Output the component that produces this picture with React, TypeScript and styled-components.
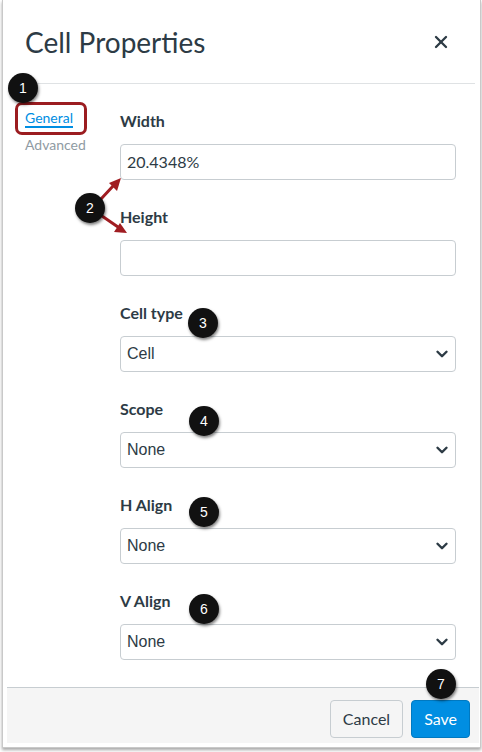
import React from 'react';
import styled, { createGlobalStyle } from 'styled-components';
import { X, ChevronDown } from 'lucide-react';

const GlobalStyle = createGlobalStyle`
  html, body {
    margin: 0;
    padding: 0;
    background: #fff;
  }
  body {
    font-family: Lato, 'Noto Sans', sans-serif;
    color: #2d3b45;
  }
  * {
    box-sizing: border-box;
  }
`;

const Page = styled.div`
  position: relative;
  width: 482px;
  height: 752px;
  overflow: hidden;
`;

const Dialog = styled.div`
  margin-left: 2px;
  width: 479px;
  height: 748px;
  display: flex;
  flex-direction: column;
  padding: 0 1px 4px 4px;
  background: #fff;
  border: 1px solid #c9c9c9;
  border-top: none;
  box-shadow: 0 2px 3px rgba(0, 0, 0, 0.35);
`;

const Header = styled.header`
  display: flex;
  align-items: flex-start;
  justify-content: space-between;
  height: 85px;
  margin: 0 4px 0 1px;
  padding: 25px 22px 0 17px;
  border-bottom: 1px solid #dfe2e4;
`;

const Title = styled.h1`
  margin: 0;
  font-size: 28px;
  line-height: 34px;
  font-weight: 400;
  color: #2d3b45;
`;

const CloseBtn = styled.button.attrs({ type: 'button' })`
  display: flex;
  align-items: center;
  justify-content: center;
  width: 24px;
  height: 34px;
  padding: 0;
  background: none;
  border: none;
  color: #2d3b45;
  svg {
    flex-shrink: 0;
  }
`;

const Body = styled.div`
  flex: 1;
  display: flex;
  padding-top: 25px;
`;

const Tabs = styled.nav`
  width: 113px;
  padding-left: 18px;
  display: flex;
  flex-direction: column;
  align-items: flex-start;
`;

const Tab = styled.span<{ $active?: boolean }>`
  font-size: 14px;
  line-height: 17px;
  color: ${(p) => (p.$active ? '#008ee2' : '#8f9ba3')};
  border-bottom: 2px solid ${(p) => (p.$active ? '#008ee2' : 'transparent')};
  & + & {
    margin-top: 8px;
  }
`;

const Form = styled.div`
  width: 336px;
  padding-top: 2px;
`;

const Field = styled.div`
  margin-bottom: 27px;
`;

const Label = styled.label`
  display: block;
  margin-bottom: 13px;
  font-size: 16px;
  line-height: 20px;
  font-weight: 700;
  color: #2d3b45;
`;

const TextInput = styled.input`
  display: block;
  width: 100%;
  height: 36px;
  padding: 0 6px;
  font-family: Lato, sans-serif;
  font-size: 16px;
  color: #2d3b45;
  background: #fff;
  border: 1px solid #c7cdd1;
  border-radius: 4px;
  outline: none;
`;

const Select = styled.div`
  display: flex;
  align-items: center;
  justify-content: space-between;
  height: 36px;
  padding: 0 4px 0 6px;
  font-family: 'Liberation Sans', Arial, sans-serif;
  font-size: 16px;
  color: #2d3b45;
  background: #fff;
  border: 1px solid #c7cdd1;
  border-radius: 4px;
`;

const Footer = styled.footer`
  display: flex;
  justify-content: flex-end;
  align-items: flex-start;
  gap: 8px;
  height: 57px;
  padding: 12px 9px 0 0;
  background: #f5f5f5;
  border-top: 1px solid #c7cdd1;
`;

const Button = styled.button.attrs({ type: 'button' })<{ $primary?: boolean }>`
  height: 38px;
  padding: 0 12px;
  font-family: Lato, sans-serif;
  font-size: 16px;
  font-weight: 400;
  border-radius: 4px;
  color: ${(p) => (p.$primary ? '#fff' : '#2d3b45')};
  background: ${(p) => (p.$primary ? '#008ee2' : '#f5f5f5')};
  border: 1px solid ${(p) => (p.$primary ? '#0079c1' : '#c7cdd1')};
`;

// callout layer
const Overlay = styled.div`
  position: absolute;
  inset: 0;
  pointer-events: none;
`;

const Bubble = styled.div<{ $x: number; $y: number }>`
  position: absolute;
  left: ${(p) => p.$x - 15}px;
  top: ${(p) => p.$y - 15}px;
  width: 30px;
  height: 30px;
  display: flex;
  align-items: center;
  justify-content: center;
  border-radius: 50%;
  background: #111;
  color: #fff;
  font-family: 'Liberation Sans', Arial, sans-serif;
  font-size: 14px;
  box-shadow: 1px 2px 3px rgba(0, 0, 0, 0.5);
`;

const Highlight = styled.div`
  position: absolute;
  left: 15px;
  top: 102px;
  width: 72px;
  height: 33px;
  border: 3px solid #9b1c20;
  border-radius: 7px;
`;

const Arrows = styled.svg`
  position: absolute;
  inset: 0;
`;

const bubbles = [
  { n: 1, x: 23, y: 88 },
  { n: 2, x: 90, y: 208 },
  { n: 3, x: 203, y: 323 },
  { n: 4, x: 204, y: 421 },
  { n: 5, x: 204, y: 512 },
  { n: 6, x: 204, y: 609 },
  { n: 7, x: 441, y: 684 },
];

const selects = [
  { label: 'Cell type', value: 'Cell' },
  { label: 'Scope', value: 'None' },
  { label: 'H Align', value: 'None' },
  { label: 'V Align', value: 'None' },
];

const App: React.FC = () => (
  <Page>
    <GlobalStyle />
    <Dialog>
      <Header>
        <Title>Cell Properties</Title>
        <CloseBtn aria-label="Close">
          <X size={20} strokeWidth={2.8} />
        </CloseBtn>
      </Header>
      <Body>
        <Tabs>
          <Tab $active>General</Tab>
          <Tab>Advanced</Tab>
        </Tabs>
        <Form>
          <Field>
            <Label>Width</Label>
            <TextInput defaultValue="20.4348%" />
          </Field>
          <Field>
            <Label>Height</Label>
            <TextInput defaultValue="" />
          </Field>
          {selects.map((s) => (
            <Field key={s.label}>
              <Label>{s.label}</Label>
              <Select>
                <span>{s.value}</span>
                <ChevronDown size={18} strokeWidth={3.2} />
              </Select>
            </Field>
          ))}
        </Form>
      </Body>
      <Footer>
        <Button>Cancel</Button>
        <Button $primary>Save</Button>
      </Footer>
    </Dialog>
    <Overlay>
      <Highlight />
      <Arrows width="482" height="752">
        <g stroke="#a01d22" strokeWidth="3" strokeLinecap="round">
          <line x1="101" y1="199" x2="114" y2="185" />
          <line x1="102" y1="216" x2="118" y2="227" />
        </g>
        <g fill="#a01d22">
          <polygon points="121,178 117,191 109,183" />
          <polygon points="127,233 114,232 120,223" />
        </g>
      </Arrows>
      {bubbles.map((b) => (
        <Bubble key={b.n} $x={b.x} $y={b.y}>
          {b.n}
        </Bubble>
      ))}
    </Overlay>
  </Page>
);

export default App;
